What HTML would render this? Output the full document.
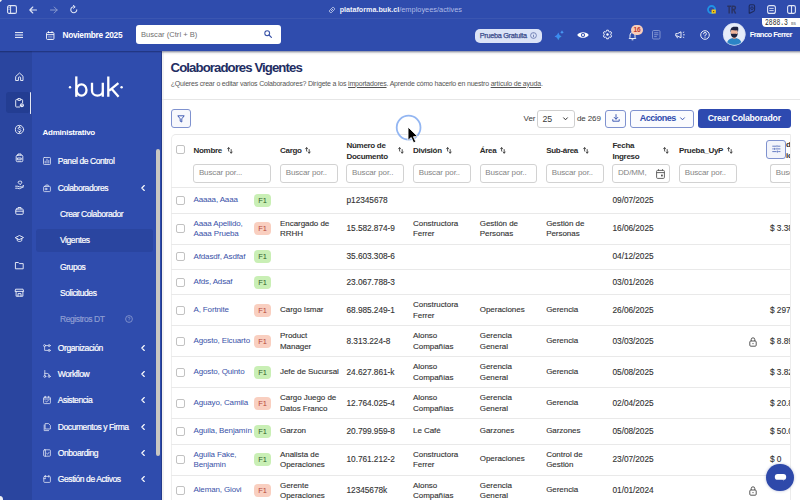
<!DOCTYPE html><html><head><meta charset='utf-8'><style>
*{box-sizing:border-box;margin:0;padding:0}
html,body{width:800px;height:500px;overflow:hidden;background:#fff;font-family:"Liberation Sans", sans-serif;}
.abs{position:absolute}
.t{position:absolute;white-space:nowrap;line-height:1}
svg{position:absolute;overflow:visible}
.hd{font-size:8px;font-weight:700;color:#2b2b2b;letter-spacing:-0.3px}
.cell{font-size:8px;color:#333;line-height:10.2px;letter-spacing:-0.05px;-webkit-text-stroke:0.12px #333}
.nm{font-size:8px;color:#3a52a8;line-height:10.2px;letter-spacing:-0.14px}
.inp{position:absolute;height:18.5px;border:1px solid #d2d2d2;border-radius:3px;background:#fff;font-size:8px;color:#858585;padding-left:4.7px;letter-spacing:-0.12px;line-height:16.5px;white-space:nowrap;overflow:hidden}
.cb{position:absolute;width:9px;height:9px;border:1px solid #c2c2c2;border-radius:2px;background:#fff}
.bdg{position:absolute;width:17.5px;height:13px;border-radius:4px;font-size:7.5px;text-align:center;line-height:13px;font-weight:400}
.g{background:#c9efb5;color:#2f5e2a}
.r{background:#f9cfc0;color:#b5473b}
.hr{position:absolute;left:171px;width:620px;height:1px;background:#e9e9e9}
.si{position:absolute;left:57.8px;font-size:8.5px;color:#fff;letter-spacing:-0.42px;-webkit-text-stroke:0.2px #fff;line-height:1;white-space:nowrap}
.ss{position:absolute;left:60px;font-size:8.5px;color:#fff;letter-spacing:-0.42px;-webkit-text-stroke:0.2px currentColor;line-height:1;white-space:nowrap}
</style></head><body>
<div class='abs' style='left:0;top:0;width:800px;height:51px;background:#2f4cad'></div>
<div class='abs' style='left:0;top:18px;width:800px;height:1px;background:rgba(255,255,255,0.06)'></div>
<div class='abs' style='left:-4px;top:-4px;width:6px;height:6px;border-radius:50%;background:#f2f2f2'></div>
<svg style='left:7px;top:5px' width='10' height='9' viewBox='0 0 10 9'><rect x='0.6' y='0.6' width='8.8' height='7.8' rx='1.5' fill='none' stroke='#dfe5f5' stroke-width='1.1'/><line x1='3.6' y1='0.6' x2='3.6' y2='8.4' stroke='#dfe5f5' stroke-width='1'/><line x1='1.4' y1='2.6' x2='2.8' y2='2.6' stroke='#dfe5f5' stroke-width='0.7'/><line x1='1.4' y1='4.3' x2='2.8' y2='4.3' stroke='#dfe5f5' stroke-width='0.7'/></svg>
<svg style='left:29px;top:5.5px' width='8' height='8' viewBox='0 0 8 8'><path d='M7.5 4H0.8M3.8 1L0.8 4L3.8 7' fill='none' stroke='#dfe5f5' stroke-width='1.1' stroke-linecap='round' stroke-linejoin='round'/></svg>
<svg style='left:50px;top:5.5px' width='8' height='8' viewBox='0 0 8 8'><path d='M0.5 4H7.2M4.2 1L7.2 4L4.2 7' fill='none' stroke='#8a9bd0' stroke-width='1' stroke-linecap='round' stroke-linejoin='round'/></svg>
<svg style='left:70px;top:5px' width='8' height='9' viewBox='0 0 8 9'><path d='M6.8 4.8A3 3 0 1 1 4.2 1.8' fill='none' stroke='#dfe5f5' stroke-width='1.1' stroke-linecap='round'/><path d='M3.4 0.4L5.2 1.8L3.6 3.3' fill='none' stroke='#dfe5f5' stroke-width='1' stroke-linecap='round' stroke-linejoin='round'/></svg>
<svg style='left:327.5px;top:5.5px' width='8' height='8' viewBox='0 0 8 8'><path d='M3.3 4.7L4.7 3.3M2.6 3.4L1.6 4.4A1.5 1.5 0 0 0 3.6 6.4L4.6 5.4M5.4 4.6L6.4 3.6A1.5 1.5 0 0 0 4.4 1.6L3.4 2.6' fill='none' stroke='#c8d2ee' stroke-width='0.9' stroke-linecap='round'/></svg>
<div class='t' style='left:339.7px;top:5.6px;font-size:7.4px;color:#fff'><span style='font-weight:700;color:#eef1fa;font-size:7.2px'>plataforma.buk.cl</span><span style='color:#aebbe6'>/employees/actives</span></div>
<svg style='left:706.8px;top:4.8px' width='10' height='10' viewBox='0 0 10 10'><circle cx='4.6' cy='4.6' r='3.6' fill='none' stroke='#1f93e6' stroke-width='1.8'/><rect x='4.6' y='4.6' width='4.2' height='4' rx='0.6' fill='#f5c518'/><circle cx='6.7' cy='6.6' r='0.6' fill='#3a3000'/></svg>
<svg style='left:727px;top:5px' width='9' height='9' viewBox='0 0 9 9'><path d='M0.3 1.2H4M2.15 1.2V8.6M5.1 8.6V1.2H6.8A1.65 1.65 0 0 1 6.8 4.5H5.1M6.6 4.5L8.6 8.6' fill='none' stroke='#2a3262' stroke-width='1.4'/></svg>
<svg style='left:747.8px;top:4.2px' width='8' height='10' viewBox='0 0 8 10'><path d='M1.2 9.6V2Q1.2 0.7 2.5 0.7H5.2Q6.6 0.7 6.6 2.2V5.4Q6.6 7.2 4.8 7.8L1.2 9.6' fill='none' stroke='#1e2a5c' stroke-width='1.1' stroke-linejoin='round'/><circle cx='4' cy='4.2' r='1.3' fill='none' stroke='#1e2a5c' stroke-width='0.9'/></svg>
<svg style='left:767px;top:5px' width='9' height='9' viewBox='0 0 9 9'><rect x='0.6' y='0.6' width='7.8' height='7.8' rx='2' fill='none' stroke='#dfe5f5' stroke-width='1.1'/><path d='M2.3 3.4H6.7M2.3 5.6H6.7' stroke='#dfe5f5' stroke-width='0.9'/></svg>
<svg style='left:787px;top:5px' width='9' height='9' viewBox='0 0 9 9'><rect x='0.6' y='0.6' width='7.8' height='7.8' rx='1.6' fill='none' stroke='#dfe5f5' stroke-width='1.1'/><line x1='4.5' y1='0.6' x2='4.5' y2='8.4' stroke='#dfe5f5' stroke-width='1.1'/></svg>
<svg style='left:15px;top:31.5px' width='8' height='6' viewBox='0 0 8 6'><path d='M0 0.6H8M0 3H8M0 5.4H8' stroke='#fff' stroke-width='0.95'/></svg>
<svg style='left:46px;top:30.5px' width='8.5' height='9' viewBox='0 0 8.5 9'><rect x='0.55' y='1.5' width='7.4' height='7' rx='1' fill='none' stroke='#fff' stroke-width='0.9'/><path d='M0.6 3.6H7.9M2.5 0.2V2.2M6 0.2V2.2' stroke='#fff' stroke-width='0.85'/><path d='M2 5.3H6.5M2 6.9H6.5' stroke='#c9d2ef' stroke-width='0.5'/></svg>
<div class='t' style='left:62.5px;top:30.8px;font-size:8.3px;font-weight:700;color:#fff;letter-spacing:-0.28px'>Noviembre 2025</div>
<div class='abs' style='left:136px;top:25.3px;width:145px;height:18.5px;background:#fff;border-radius:3px'></div>
<div class='t' style='left:141px;top:30.5px;font-size:7.6px;color:#6f6f6f'>Buscar (Ctrl + B)</div>
<svg style='left:264px;top:30px' width='8' height='8' viewBox='0 0 8 8'><circle cx='3.2' cy='3.2' r='2.4' fill='none' stroke='#3c55a8' stroke-width='1.1'/><path d='M5 5L7.4 7.4' stroke='#3c55a8' stroke-width='1.2' stroke-linecap='round'/></svg>
<div class='abs' style='left:474.7px;top:29px;width:67.5px;height:13.5px;background:#dbe3f7;border-radius:5px'></div>
<div class='t' style='left:479.7px;top:32px;font-size:7.3px;color:#3b4c8c;letter-spacing:-0.3px;-webkit-text-stroke:0.25px #3b4c8c'>Prueba Gratuita</div>
<svg style='left:529.5px;top:31.8px' width='7' height='7' viewBox='0 0 7 7'><circle cx='3.5' cy='3.5' r='2.9' fill='none' stroke='#5f70a8' stroke-width='0.8'/><path d='M3.5 3V5.2' stroke='#5f70a8' stroke-width='0.8'/><circle cx='3.5' cy='1.9' r='0.45' fill='#5f70a8'/></svg>
<svg style='left:553.5px;top:29.5px' width='11' height='11' viewBox='0 0 11 11'><defs><linearGradient id='spg' x1='0' y1='0' x2='1' y2='1'><stop offset='0' stop-color='#3f86f5'/><stop offset='0.6' stop-color='#3a8ef0'/><stop offset='1' stop-color='#3fc0a0'/></linearGradient></defs><path d='M4.3 2.6Q5 5.6 7.6 6.5Q5 7.4 4.3 10.2Q3.6 7.4 0.6 6.5Q3.6 5.6 4.3 2.6Z' fill='url(#spg)'/><path d='M8 0.3Q8.3 1.8 9.8 2.2Q8.3 2.6 8 4.1Q7.7 2.6 6.2 2.2Q7.7 1.8 8 0.3Z' fill='#4a9af5'/></svg>
<svg style='left:575.5px;top:30px' width='14' height='10' viewBox='-0.5 -0.5 12 9'><path d='M0.3 4C2.2 0.6 8.8 0.6 10.7 4C8.8 7.4 2.2 7.4 0.3 4Z' fill='#fff'/><circle cx='5.5' cy='4' r='1.9' fill='#2f4cad'/><circle cx='5.5' cy='4' r='1' fill='#fff'/></svg>
<svg style='left:602.8px;top:30.3px' width='9' height='9' viewBox='0 0 9 9'><path d='M3.66 0.18 L5.34 0.18 L5.68 1.42 L6.58 1.94 L7.82 1.61 L8.66 3.07 L7.76 3.98 L7.76 5.02 L8.66 5.93 L7.82 7.39 L6.58 7.06 L5.68 7.58 L5.34 8.82 L3.66 8.82 L3.32 7.58 L2.42 7.06 L1.18 7.39 L0.34 5.93 L1.24 5.02 L1.24 3.98 L0.34 3.07 L1.18 1.61 L2.42 1.94 L3.32 1.42Z' fill='none' stroke='#fff' stroke-width='0.9' stroke-linejoin='round'/><circle cx='4.5' cy='4.5' r='1.2' fill='#fff'/></svg>
<svg style='left:627.5px;top:30.5px' width='9' height='10' viewBox='0 0 9 10'><path d='M1.2 7.5H7.8L7 6.3V4A2.5 2.5 0 0 0 2 4V6.3Z' fill='none' stroke='#fff' stroke-width='0.9' stroke-linejoin='round'/><path d='M3.6 8.8H5.4' stroke='#fff' stroke-width='0.9'/></svg>
<div class='abs' style='left:630.8px;top:24.8px;width:12.5px;height:10.5px;border-radius:5px;background:#f9cdb9'></div>
<div class='t' style='left:630.8px;top:26.6px;width:12.5px;text-align:center;font-size:6.6px;font-weight:700;color:#c0392b;letter-spacing:-0.2px'>16</div>
<svg style='left:651.5px;top:30px' width='8' height='10' viewBox='0 0 8 10'><rect x='0.5' y='0.5' width='7.5' height='8.5' rx='1.2' fill='none' stroke='#8a9bd4' stroke-width='0.9'/><path d='M2.2 2.8H6.3M2.2 4.7H6.3M2.2 6.6H4.8' stroke='#8a9bd4' stroke-width='0.9'/></svg>
<svg style='left:675px;top:31px' width='11' height='8' viewBox='0 0 11 8'><path d='M0.8 2.6H2.6L6 0.8V6.8L2.6 5H0.8Z' fill='none' stroke='#fff' stroke-width='0.9' stroke-linejoin='round'/><path d='M1.8 5L2.4 7.2' stroke='#fff' stroke-width='0.9'/><path d='M7.8 1.6L9.2 1M8 3.8H9.8M7.8 6L9.2 6.6' stroke='#fff' stroke-width='0.8'/></svg>
<svg style='left:700px;top:30px' width='10' height='10' viewBox='0 0 10 10'><circle cx='5' cy='5' r='4.3' fill='none' stroke='#fff' stroke-width='0.9'/><path d='M3.6 3.8A1.4 1.4 0 1 1 5.2 5.2C5 5.3 5 5.6 5 6' fill='none' stroke='#fff' stroke-width='0.9' stroke-linecap='round'/><circle cx='5' cy='7.3' r='0.5' fill='#fff'/></svg>
<svg style='left:722.8px;top:23.2px' width='22.5' height='22.5' viewBox='0 0 22 22'>
<defs><clipPath id='av'><circle cx='11' cy='11' r='10.8'/></clipPath></defs>
<circle cx='11' cy='11' r='11' fill='#e6ecf9'/>
<g clip-path='url(#av)'>
<path d='M3.5 21.5C3.8 16.8 6.5 14.6 11 14.6S18.2 16.8 18.5 21.5Z' fill='#2b84c6'/>
<rect x='9.4' y='12.2' width='3.2' height='3.2' fill='#e6a184'/>
<ellipse cx='11' cy='9.2' rx='3.3' ry='3.9' fill='#efb59a'/>
<path d='M7.6 9.4C7.6 13.2 9 14.4 11 14.4S14.4 13.2 14.4 9.4L13.7 10.8C12.8 10.5 9.2 10.5 8.3 10.8Z' fill='#1e2440'/>
<path d='M7.4 9.2C7 5.4 8.2 3.8 11.2 3.7C13 3.6 14.6 3.2 14.8 4.4C15.2 5.6 14.8 7.8 14.6 9.2L14 7.2C12.2 7.4 10 7 8.2 6.8Z' fill='#1c2242'/>
</g>
<circle cx='11' cy='11' r='10.7' fill='none' stroke='#c9d3ee' stroke-width='0.5'/>
</svg>
<div class='t' style='left:749.7px;top:31px;font-size:7.6px;font-weight:700;color:#fff;letter-spacing:-0.55px'>Franco Ferrer</div>
<div class='abs' style='left:761.8px;top:17.5px;width:40px;height:9.5px;background:#fff;border-radius:0 0 0 4px'></div>
<div class='t' style='left:765.4px;top:19.4px;font-family:"Liberation Mono",monospace;font-size:8.6px;color:#2a2a2a;transform:scaleX(0.74);transform-origin:0 0'>2888.3</div>
<div class='t' style='left:791px;top:21px;font-family:"Liberation Mono",monospace;font-size:6px;color:#555;transform:scaleX(0.7);transform-origin:0 0'>ms</div>
<div class='abs' style='left:0;top:51px;width:32px;height:449px;background:#2a459f'></div>
<div class='abs' style='left:32px;top:51px;width:130px;height:449px;background:#2f4cad'></div>
<div class='abs' style='left:0;top:51px;width:800px;height:1px;background:rgba(15,25,70,0.4)'></div>
<div class='abs' style='left:0;top:52px;width:800px;height:1px;background:rgba(15,25,70,0.12)'></div>
<div class='abs' style='left:162px;top:52px;width:638px;height:3px;background:linear-gradient(rgba(0,0,0,0.10),rgba(0,0,0,0))'></div>
<div class='abs' style='left:161px;top:52px;width:1px;height:448px;background:rgba(15,25,80,0.35)'></div>
<div class='abs' style='left:162px;top:52px;width:1.5px;height:448px;background:rgba(0,0,0,0.05)'></div>
<div class='abs' style='left:5.6px;top:91.8px;width:24px;height:21.5px;background:#233d92;border-radius:3px'></div>
<div class='abs' style='left:29.5px;top:91.5px;width:1.3px;height:22.5px;background:#e6e9f3;border-radius:1px'></div>
<svg style='left:14.5px;top:71.5px' width='9' height='9' viewBox='0 0 9 9'><path d='M1 4.2L4.5 1L8 4.2V8.5H5.6V6A1.1 1.1 0 0 0 3.4 6V8.5H1Z' fill='none' stroke='#e9edf8' stroke-width='0.95' stroke-linejoin='round' stroke-linecap='round'/></svg>
<svg style='left:14.5px;top:98.3px' width='9' height='9' viewBox='0 0 9 9'><path d='M2.8 1.6H1.4A0.7 0.7 0 0 0 0.7 2.3V8.3A0.7 0.7 0 0 0 1.4 9H4.6M5.8 1.6H6.9A0.7 0.7 0 0 1 7.6 2.3V4.6' fill='none' stroke='#e9edf8' stroke-width='0.95' stroke-linejoin='round' stroke-linecap='round'/><rect x='2.8' y='0.6' width='3' height='1.8' rx='0.4' fill='none' stroke='#e9edf8' stroke-width='0.95' stroke-linejoin='round' stroke-linecap='round'/><circle cx='6.9' cy='7.2' r='2' fill='#e9edf8'/><path d='M6.9 6.2V7.3H7.7' fill='none' stroke='#233d92' stroke-width='0.6'/></svg>
<svg style='left:14.5px;top:124.80000000000001px' width='9' height='9' viewBox='0 0 9 9'><circle cx='4.5' cy='4.5' r='4.1' fill='none' stroke='#e9edf8' stroke-width='0.95' stroke-linejoin='round' stroke-linecap='round'/><path d='M5.9 3.1C5.6 2.5 5.1 2.3 4.5 2.3C3.7 2.3 3.1 2.7 3.1 3.3C3.1 4.7 5.9 4.1 5.9 5.6C5.9 6.3 5.3 6.7 4.5 6.7C3.8 6.7 3.3 6.4 3 5.9M4.5 1.5V2.3M4.5 6.7V7.5' fill='none' stroke='#e9edf8' stroke-width='0.95' stroke-linejoin='round' stroke-linecap='round'/></svg>
<svg style='left:14.5px;top:152.7px' width='9' height='9' viewBox='0 0 9 9'><rect x='1.2' y='2.2' width='6.6' height='6.5' rx='1.2' fill='none' stroke='#e9edf8' stroke-width='0.95' stroke-linejoin='round' stroke-linecap='round'/><path d='M3 2.2V1H6V2.2M2.8 5H6.2V6.8H2.8Z' fill='none' stroke='#e9edf8' stroke-width='0.95' stroke-linejoin='round' stroke-linecap='round'/></svg>
<svg style='left:14.5px;top:179.5px' width='9' height='9' viewBox='0 0 9 9'><path d='M0.6 6.2H2.3L4.4 6.8H6.5L8.6 5.5M0.6 8.2H2.3L4.6 8.7L8.6 6.8' fill='none' stroke='#e9edf8' stroke-width='0.95' stroke-linejoin='round' stroke-linecap='round'/><path d='M5 4.5L3.4 2.9A1 1 0 0 1 5 1.5A1 1 0 0 1 6.6 2.9Z' fill='none' stroke='#e9edf8' stroke-width='0.95' stroke-linejoin='round' stroke-linecap='round'/></svg>
<svg style='left:14.5px;top:206.3px' width='9' height='9' viewBox='0 0 9 9'><rect x='0.8' y='3' width='7.4' height='5.3' rx='0.8' fill='none' stroke='#e9edf8' stroke-width='0.95' stroke-linejoin='round' stroke-linecap='round'/><path d='M3 3V1.5H6V3M0.8 5.2H8.2' fill='none' stroke='#e9edf8' stroke-width='0.95' stroke-linejoin='round' stroke-linecap='round'/></svg>
<svg style='left:14.5px;top:233.5px' width='9' height='9' viewBox='0 0 9 9'><path d='M0.5 3.5L4.5 1.5L8.5 3.5L4.5 5.5Z M2.2 4.5V6.6C3.5 7.8 5.5 7.8 6.8 6.6V4.5' fill='none' stroke='#e9edf8' stroke-width='0.95' stroke-linejoin='round' stroke-linecap='round'/></svg>
<svg style='left:14.5px;top:260.7px' width='9' height='9' viewBox='0 0 9 9'><path d='M0.8 1.5H3.4L4.4 2.6H8.2V7.8H0.8Z' fill='none' stroke='#e9edf8' stroke-width='0.95' stroke-linejoin='round' stroke-linecap='round'/></svg>
<svg style='left:14.5px;top:287.5px' width='9' height='9' viewBox='0 0 9 9'><path d='M1 1.2H8L8.6 3.4H0.4Z M1.1 3.4V8.2H7.9V3.4M3 8.2V5.6H6V8.2' fill='none' stroke='#e9edf8' stroke-width='0.95' stroke-linejoin='round' stroke-linecap='round'/></svg>
<svg style='left:64px;top:70px' width='64' height='32' viewBox='0 0 64 32'>
<g fill='none' stroke='#fff' stroke-width='2.3' stroke-linecap='butt'>
<path d='M12.3 6.4V26.8'/>
<ellipse cx='17.5' cy='20' rx='5' ry='5.7'/>
<path d='M28 12.8V20.8A5.4 4.9 0 0 0 38.8 20.8V12.8M38.8 19V26.8'/>
<path d='M44.3 6.4V26.8M54.4 13.2L45.2 20.6M47.6 18.8L54.6 26.8'/>
</g>
<circle cx='6' cy='17.2' r='1.2' fill='#fff'/><circle cx='57.6' cy='17.2' r='1.2' fill='#fff'/>
</svg>
<div class='t' style='left:42.6px;top:129px;font-size:8px;font-weight:700;color:#fff;letter-spacing:-0.26px'>Administrativo</div>
<div class='abs' style='left:156.2px;top:149.3px;width:3.6px;height:307px;background:#c9c7c2;border-radius:2px'></div>
<svg style='left:43.2px;top:157.4px' width='8' height='8' viewBox='0 0 8 8'><rect x='0.5' y='0.5' width='7' height='7' rx='0.8' fill='none' stroke='#dfe4f4' stroke-width='0.8' stroke-linejoin='round' stroke-linecap='round'/><path d='M2.2 6V4.2M4 6V2.2M5.8 6V3.5' fill='none' stroke='#dfe4f4' stroke-width='0.8' stroke-linejoin='round' stroke-linecap='round'/></svg>
<div class='si' style='top:157.4px'>Panel de Control</div>
<svg style='left:43.2px;top:183.5px' width='8' height='8' viewBox='0 0 8 8'><rect x='0.6' y='2.4' width='6.8' height='5.2' rx='0.8' fill='none' stroke='#dfe4f4' stroke-width='0.8' stroke-linejoin='round' stroke-linecap='round'/><path d='M2.8 2.4V1H5.2V2.4' fill='none' stroke='#dfe4f4' stroke-width='0.8' stroke-linejoin='round' stroke-linecap='round'/><circle cx='3' cy='5' r='0.9' fill='none' stroke='#dfe4f4' stroke-width='0.8' stroke-linejoin='round' stroke-linecap='round'/></svg>
<div class='si' style='top:183.5px'>Colaboradores</div>
<svg style='left:141px;top:184.5px' width='4' height='6' viewBox='0 0 4 6'><path d='M3.3 0.5L0.8 3L3.3 5.5' fill='none' stroke='#fff' stroke-width='1.1' stroke-linecap='round' stroke-linejoin='round'/></svg>
<div class='abs' style='left:36px;top:229px;width:117px;height:23px;background:#2a45a0;border-radius:3px'></div>
<div class='ss' style='top:210px;color:#fff'>Crear Colaborador</div>
<div class='ss' style='top:236.4px;color:#fff'>Vigentes</div>
<div class='ss' style='top:262.5px;color:#fff'>Grupos</div>
<div class='ss' style='top:289px;color:#fff'>Solicitudes</div>
<div class='ss' style='top:315px;color:#8e9dd2'>Registros DT</div>
<svg style='left:124.5px;top:315px' width='8' height='8' viewBox='0 0 8 8'><circle cx='4' cy='4' r='3.4' fill='none' stroke='#8e9dd2' stroke-width='0.8'/><path d='M3 3.2A1 1 0 1 1 4.2 4.2C4 4.3 4 4.5 4 4.8' fill='none' stroke='#8e9dd2' stroke-width='0.7'/><circle cx='4' cy='5.8' r='0.35' fill='#8e9dd2'/></svg>
<svg style='left:43px;top:343.7px' width='8' height='8' viewBox='0 0 8 8'><circle cx='1.6' cy='1.6' r='1' fill='none' stroke='#dfe4f4' stroke-width='0.8' stroke-linejoin='round' stroke-linecap='round'/><circle cx='6.2' cy='1.6' r='1' fill='none' stroke='#dfe4f4' stroke-width='0.8' stroke-linejoin='round' stroke-linecap='round'/><circle cx='6.2' cy='6.4' r='1' fill='none' stroke='#dfe4f4' stroke-width='0.8' stroke-linejoin='round' stroke-linecap='round'/><path d='M2.6 1.6H5.2M1.6 2.6V6.4H5.2' fill='none' stroke='#dfe4f4' stroke-width='0.8' stroke-linejoin='round' stroke-linecap='round'/></svg>
<div class='si' style='top:343.7px'>Organización</div>
<svg style='left:141px;top:344.7px' width='4' height='6' viewBox='0 0 4 6'><path d='M3.3 0.5L0.8 3L3.3 5.5' fill='none' stroke='#fff' stroke-width='1.1' stroke-linecap='round' stroke-linejoin='round'/></svg>
<svg style='left:43px;top:369.9px' width='8' height='8' viewBox='0 0 8 8'><circle cx='1.8' cy='6.4' r='1' fill='none' stroke='#dfe4f4' stroke-width='0.8' stroke-linejoin='round' stroke-linecap='round'/><circle cx='6.2' cy='6.4' r='1' fill='none' stroke='#dfe4f4' stroke-width='0.8' stroke-linejoin='round' stroke-linecap='round'/><path d='M1.8 0.5V5.4M1.8 3.4H4.2A2 2 0 0 1 6.2 5.4' fill='none' stroke='#dfe4f4' stroke-width='0.8' stroke-linejoin='round' stroke-linecap='round'/></svg>
<div class='si' style='top:369.9px'>Workflow</div>
<svg style='left:141px;top:370.9px' width='4' height='6' viewBox='0 0 4 6'><path d='M3.3 0.5L0.8 3L3.3 5.5' fill='none' stroke='#fff' stroke-width='1.1' stroke-linecap='round' stroke-linejoin='round'/></svg>
<svg style='left:43px;top:396.4px' width='8' height='8' viewBox='0 0 8 8'><rect x='0.6' y='1.2' width='6.8' height='6.4' rx='0.8' fill='none' stroke='#dfe4f4' stroke-width='0.8' stroke-linejoin='round' stroke-linecap='round'/><path d='M0.6 3H7.4M2.4 0.3V1.6M5.6 0.3V1.6M2.6 5.2L3.6 6L5.4 4.2' fill='none' stroke='#dfe4f4' stroke-width='0.8' stroke-linejoin='round' stroke-linecap='round'/></svg>
<div class='si' style='top:396.4px'>Asistencia</div>
<svg style='left:141px;top:397.4px' width='4' height='6' viewBox='0 0 4 6'><path d='M3.3 0.5L0.8 3L3.3 5.5' fill='none' stroke='#fff' stroke-width='1.1' stroke-linecap='round' stroke-linejoin='round'/></svg>
<svg style='left:43px;top:422.6px' width='8' height='8' viewBox='0 0 8 8'><path d='M2.5 0.6H5.6L7.4 2.4V6H2.5Z' fill='none' stroke='#dfe4f4' stroke-width='0.8' stroke-linejoin='round' stroke-linecap='round'/><path d='M1.2 2V7.6H5.6' fill='none' stroke='#dfe4f4' stroke-width='0.8' stroke-linejoin='round' stroke-linecap='round'/></svg>
<div class='si' style='top:422.6px'>Documentos y Firma</div>
<svg style='left:141px;top:423.6px' width='4' height='6' viewBox='0 0 4 6'><path d='M3.3 0.5L0.8 3L3.3 5.5' fill='none' stroke='#fff' stroke-width='1.1' stroke-linecap='round' stroke-linejoin='round'/></svg>
<svg style='left:43px;top:448.8px' width='8' height='8' viewBox='0 0 8 8'><rect x='0.6' y='0.8' width='6.8' height='6.4' rx='0.8' fill='none' stroke='#dfe4f4' stroke-width='0.8' stroke-linejoin='round' stroke-linecap='round'/><path d='M2.4 0.8V7.2M3.6 4.3L4.6 5.2L6 3.4' fill='none' stroke='#dfe4f4' stroke-width='0.8' stroke-linejoin='round' stroke-linecap='round'/></svg>
<div class='si' style='top:448.8px'>Onboarding</div>
<svg style='left:141px;top:449.8px' width='4' height='6' viewBox='0 0 4 6'><path d='M3.3 0.5L0.8 3L3.3 5.5' fill='none' stroke='#fff' stroke-width='1.1' stroke-linecap='round' stroke-linejoin='round'/></svg>
<svg style='left:43px;top:475px' width='8' height='8' viewBox='0 0 8 8'><rect x='0.8' y='1.4' width='6.6' height='6' rx='0.8' fill='none' stroke='#dfe4f4' stroke-width='0.8' stroke-linejoin='round' stroke-linecap='round'/><path d='M2.4 0.4V2.2M5.8 0.4V2.2M0.8 3.6H2.6' fill='none' stroke='#dfe4f4' stroke-width='0.8' stroke-linejoin='round' stroke-linecap='round'/></svg>
<div class='si' style='top:475px'>Gestión de Activos</div>
<svg style='left:141px;top:476px' width='4' height='6' viewBox='0 0 4 6'><path d='M3.3 0.5L0.8 3L3.3 5.5' fill='none' stroke='#fff' stroke-width='1.1' stroke-linecap='round' stroke-linejoin='round'/></svg>
<div class='t' style='left:170.6px;top:61.2px;font-size:13.2px;font-weight:700;color:#222d62;letter-spacing:-0.92px'>Colaboradores Vigentes</div>
<div class='t' style='left:170.8px;top:79.8px;font-size:7px;color:#555;letter-spacing:-0.2px'>¿Quieres crear o editar varios Colaboradores? Dirígete a los <u>importadores</u>. Aprende cómo hacerlo en nuestro <u>artículo de ayuda</u>.</div>
<div class='abs' style='left:162px;top:99px;width:638px;height:1px;background:#e6e6e6'></div>
<div class='abs' style='left:171px;top:109px;width:19.8px;height:19px;border:1px solid #7f92cf;border-radius:3px;background:#f7f8fc'></div>
<svg style='left:177px;top:114.5px' width='8' height='8' viewBox='0 0 8 8'><path d='M0.8 0.8H7.2L4.8 3.8V7L3.2 6.2V3.8Z' fill='none' stroke='#2f4cad' stroke-width='0.9' stroke-linejoin='round'/></svg>
<div class='t' style='left:523.6px;top:114.5px;font-size:8px;color:#3b3b3b;letter-spacing:-0.1px'>Ver</div>
<div class='abs' style='left:537px;top:109.6px;width:37.5px;height:18.2px;border:1px solid #cfcfcf;border-radius:3px'></div>
<div class='t' style='left:542.4px;top:114.6px;font-size:8.8px;color:#3b3b3b'>25</div>
<svg style='left:562.5px;top:116.8px' width='5' height='4' viewBox='0 0 5 4'><path d='M0.6 0.8L2.5 2.8L4.4 0.8' fill='none' stroke='#333' stroke-width='1' stroke-linecap='round'/></svg>
<div class='t' style='left:576.9px;top:114.5px;font-size:8px;color:#3b3b3b;letter-spacing:-0.1px'>de 269</div>
<div class='abs' style='left:605.4px;top:109.6px;width:20.2px;height:18.2px;border:1px solid #7f92cf;border-radius:3px;background:#fafbfe'></div>
<svg style='left:611.5px;top:114px' width='8' height='8' viewBox='0 0 8 8'><path d='M4 0.6V5M2.2 3.4L4 5.2L5.8 3.4M0.8 5.6V7.2H7.2V5.6' fill='none' stroke='#2f4cad' stroke-width='0.9' stroke-linecap='round' stroke-linejoin='round'/></svg>
<div class='abs' style='left:630.1px;top:109.5px;width:63.7px;height:18.6px;border:1px solid #7f92cf;border-radius:3px;background:#fafbfe'></div>
<div class='t' style='left:639.8px;top:114px;font-size:9px;font-weight:700;color:#2f4cad;letter-spacing:-0.5px'>Acciones</div>
<svg style='left:679.5px;top:116.8px' width='5' height='4' viewBox='0 0 5 4'><path d='M0.6 0.8L2.5 2.8L4.4 0.8' fill='none' stroke='#2f4cad' stroke-width='0.9' stroke-linecap='round'/></svg>
<div class='abs' style='left:698.4px;top:109.3px;width:92.3px;height:18.7px;border-radius:3px;background:#2e4ab0'></div>
<div class='t' style='left:707.8px;top:114.4px;font-size:8.7px;font-weight:700;color:#fff;letter-spacing:-0.22px'>Crear Colaborador</div>
<div class='abs' style='left:171px;top:133.8px;width:620px;height:380px;border:1px solid #eeeeee;border-top:1.5px solid #e8e8e8;border-radius:5px 0 0 0;background:#fff'></div>
<div class='cb' style='left:176px;top:145.2px'></div>
<div class='t hd' style='left:193.5px;top:147px'>Nombre</div>
<svg style='left:226.5px;top:147px' width='6' height='7' viewBox='0 0 6 7'><path d='M1.6 4V0.8M0.6 1.8L1.6 0.6L2.6 1.8M4.2 2.6V6M3.2 5L4.2 6.2L5.2 5' fill='none' stroke='#333' stroke-width='0.85' stroke-linecap='round' stroke-linejoin='round'/></svg>
<div class='t hd' style='left:280px;top:147px'>Cargo</div>
<svg style='left:305.4px;top:147px' width='6' height='7' viewBox='0 0 6 7'><path d='M1.6 4V0.8M0.6 1.8L1.6 0.6L2.6 1.8M4.2 2.6V6M3.2 5L4.2 6.2L5.2 5' fill='none' stroke='#333' stroke-width='0.85' stroke-linecap='round' stroke-linejoin='round'/></svg>
<div class='t hd' style='left:346.5px;top:141.5px'>Número de</div>
<div class='t hd' style='left:346.5px;top:152.7px'>Documento</div>
<svg style='left:397.5px;top:147px' width='6' height='7' viewBox='0 0 6 7'><path d='M1.6 4V0.8M0.6 1.8L1.6 0.6L2.6 1.8M4.2 2.6V6M3.2 5L4.2 6.2L5.2 5' fill='none' stroke='#333' stroke-width='0.85' stroke-linecap='round' stroke-linejoin='round'/></svg>
<div class='t hd' style='left:413px;top:147px'>División</div>
<svg style='left:446.4px;top:147px' width='6' height='7' viewBox='0 0 6 7'><path d='M1.6 4V0.8M0.6 1.8L1.6 0.6L2.6 1.8M4.2 2.6V6M3.2 5L4.2 6.2L5.2 5' fill='none' stroke='#333' stroke-width='0.85' stroke-linecap='round' stroke-linejoin='round'/></svg>
<div class='t hd' style='left:479.8px;top:147px'>Área</div>
<svg style='left:500px;top:147px' width='6' height='7' viewBox='0 0 6 7'><path d='M1.6 4V0.8M0.6 1.8L1.6 0.6L2.6 1.8M4.2 2.6V6M3.2 5L4.2 6.2L5.2 5' fill='none' stroke='#333' stroke-width='0.85' stroke-linecap='round' stroke-linejoin='round'/></svg>
<div class='t hd' style='left:546.2px;top:147px'>Sub-área</div>
<svg style='left:582.5px;top:147px' width='6' height='7' viewBox='0 0 6 7'><path d='M1.6 4V0.8M0.6 1.8L1.6 0.6L2.6 1.8M4.2 2.6V6M3.2 5L4.2 6.2L5.2 5' fill='none' stroke='#333' stroke-width='0.85' stroke-linecap='round' stroke-linejoin='round'/></svg>
<div class='t hd' style='left:612.5px;top:141.5px'>Fecha</div>
<div class='t hd' style='left:612.5px;top:152.7px'>Ingreso</div>
<svg style='left:663px;top:147px' width='6' height='7' viewBox='0 0 6 7'><path d='M1.6 4V0.8M0.6 1.8L1.6 0.6L2.6 1.8M4.2 2.6V6M3.2 5L4.2 6.2L5.2 5' fill='none' stroke='#333' stroke-width='0.85' stroke-linecap='round' stroke-linejoin='round'/></svg>
<div class='t hd' style='left:679px;top:147px'>Prueba_UyP</div>
<svg style='left:726.8px;top:147px' width='6' height='7' viewBox='0 0 6 7'><path d='M1.6 4V0.8M0.6 1.8L1.6 0.6L2.6 1.8M4.2 2.6V6M3.2 5L4.2 6.2L5.2 5' fill='none' stroke='#333' stroke-width='0.85' stroke-linecap='round' stroke-linejoin='round'/></svg>
<div class='t hd' style='left:786px;top:141px'>d</div>
<div class='t hd' style='left:786px;top:152.2px'>ic</div>
<div class='abs' style='left:766.3px;top:139.5px;width:19.5px;height:19px;border:1px solid #7f92cf;border-radius:3px;background:#f2f4fb'></div>
<svg style='left:771.8px;top:145.2px' width='9' height='8' viewBox='0 0 9 8'><path d='M0.3 1.2H4.2M5.8 1.2H8.4M0.3 3.9H1.8M3.4 3.9H8.4M0.3 6.6H4.6M6.2 6.6H8.4' stroke='#3a55b0' stroke-width='0.75'/><path d='M5 0.2V2.2M2.6 2.9V4.9M5.4 5.6V7.6' stroke='#3a55b0' stroke-width='0.75'/></svg>
<div class='inp' style='left:193.2px;top:164.1px;width:78px'>Buscar por...</div>
<div class='inp' style='left:280px;top:164.1px;width:58px'>Buscar por..</div>
<div class='inp' style='left:346.3px;top:164.1px;width:57.5px'>Buscar por..</div>
<div class='inp' style='left:413px;top:164.1px;width:58px'>Buscar por..</div>
<div class='inp' style='left:479.6px;top:164.1px;width:57.5px'>Buscar por..</div>
<div class='inp' style='left:546px;top:164.1px;width:58px'>Buscar por..</div>
<div class='inp' style='left:612.2px;top:164.1px;width:58px'>DD/MM,</div>
<div class='inp' style='left:679px;top:164.1px;width:58px'>Buscar por..</div>
<div class='inp' style='left:770px;top:164.1px;width:21px;border-right:none;border-radius:3px 0 0 3px'>Busc</div>
<svg style='left:655.5px;top:168.5px' width='9' height='10' viewBox='0 0 9 10'><rect x='0.6' y='1.4' width='7.8' height='8' rx='1' fill='none' stroke='#555' stroke-width='0.9'/><path d='M0.6 3.6H8.4M2.5 0.2V1.8M6.5 0.2V1.8' stroke='#555' stroke-width='0.9'/><rect x='5' y='5.6' width='1.8' height='1.8' fill='#555'/></svg>
<div class='hr' style='top:187px'></div>
<div class='cb' style='left:176px;top:196.2px'></div>
<div class='bdg g' style='left:253.8px;top:194.2px'>F1</div>
<div class='abs nm' style='left:193.5px;top:196.28px;line-height:1;white-space:nowrap;font-size:8px;'>Aaaaa, Aaaa</div>
<div class='abs cell' style='left:346.5px;top:196.02px;line-height:1;white-space:nowrap;font-size:8.3px;'>p12345678</div>
<div class='abs cell' style='left:612.5px;top:196.02px;line-height:1;white-space:nowrap;font-size:8.3px;'>09/07/2025</div>
<div class='hr' style='top:212.8px'></div>
<div class='cb' style='left:176px;top:224.3px'></div>
<div class='bdg r' style='left:253.8px;top:222.3px'>F1</div>
<div class='abs nm' style='left:193.5px;top:219.83px;line-height:1;white-space:nowrap;font-size:8px;'>Aaaa Apellido,</div>
<div class='abs nm' style='left:193.5px;top:230.03px;line-height:1;white-space:nowrap;font-size:8px;'>Aaaa Prueba</div>
<div class='abs cell' style='left:280px;top:219.83px;line-height:1;white-space:nowrap;font-size:8px;'>Encargado de</div>
<div class='abs cell' style='left:280px;top:230.03px;line-height:1;white-space:nowrap;font-size:8px;'>RRHH</div>
<div class='abs cell' style='left:346.5px;top:224.17px;line-height:1;white-space:nowrap;font-size:8.3px;'>15.582.874-9</div>
<div class='abs cell' style='left:413px;top:219.83px;line-height:1;white-space:nowrap;font-size:8px;'>Constructora</div>
<div class='abs cell' style='left:413px;top:230.03px;line-height:1;white-space:nowrap;font-size:8px;'>Ferrer</div>
<div class='abs cell' style='left:479.8px;top:219.83px;line-height:1;white-space:nowrap;font-size:8px;'>Gestión de</div>
<div class='abs cell' style='left:479.8px;top:230.03px;line-height:1;white-space:nowrap;font-size:8px;'>Personas</div>
<div class='abs cell' style='left:546.2px;top:219.83px;line-height:1;white-space:nowrap;font-size:8px;'>Gestión de</div>
<div class='abs cell' style='left:546.2px;top:230.03px;line-height:1;white-space:nowrap;font-size:8px;'>Personas</div>
<div class='abs cell' style='left:612.5px;top:224.17px;line-height:1;white-space:nowrap;font-size:8.3px;'>16/06/2025</div>
<div class='abs cell' style='left:770px;top:224.17px;line-height:1;white-space:nowrap;font-size:8.3px;'>$ 3.38</div>
<div class='hr' style='top:243.8px'></div>
<div class='cb' style='left:176px;top:252.4px'></div>
<div class='bdg g' style='left:253.8px;top:250.4px'>F1</div>
<div class='abs nm' style='left:193.5px;top:252.58px;line-height:1;white-space:nowrap;font-size:8px;'>Afdasdf, Asdfaf</div>
<div class='abs cell' style='left:346.5px;top:252.32px;line-height:1;white-space:nowrap;font-size:8.3px;'>35.603.308-6</div>
<div class='abs cell' style='left:612.5px;top:252.32px;line-height:1;white-space:nowrap;font-size:8.3px;'>04/12/2025</div>
<div class='hr' style='top:269.1px'></div>
<div class='cb' style='left:176px;top:277.8px'></div>
<div class='bdg g' style='left:253.8px;top:275.8px'>F1</div>
<div class='abs nm' style='left:193.5px;top:277.88px;line-height:1;white-space:nowrap;font-size:8px;'>Afds, Adsaf</div>
<div class='abs cell' style='left:346.5px;top:277.62px;line-height:1;white-space:nowrap;font-size:8.3px;'>23.067.788-3</div>
<div class='abs cell' style='left:612.5px;top:277.62px;line-height:1;white-space:nowrap;font-size:8.3px;'>03/01/2026</div>
<div class='hr' style='top:294.4px'></div>
<div class='cb' style='left:176px;top:305.9px'></div>
<div class='bdg r' style='left:253.8px;top:303.9px'>F1</div>
<div class='abs nm' style='left:193.5px;top:306.03px;line-height:1;white-space:nowrap;font-size:8px;'>A, Fortnite</div>
<div class='abs cell' style='left:280px;top:306.03px;line-height:1;white-space:nowrap;font-size:8px;'>Cargo Ismar</div>
<div class='abs cell' style='left:346.5px;top:305.77px;line-height:1;white-space:nowrap;font-size:8.3px;'>68.985.249-1</div>
<div class='abs cell' style='left:413px;top:301.43px;line-height:1;white-space:nowrap;font-size:8px;'>Constructora</div>
<div class='abs cell' style='left:413px;top:311.63px;line-height:1;white-space:nowrap;font-size:8px;'>Ferrer</div>
<div class='abs cell' style='left:479.8px;top:306.03px;line-height:1;white-space:nowrap;font-size:8px;'>Operaciones</div>
<div class='abs cell' style='left:546.2px;top:306.03px;line-height:1;white-space:nowrap;font-size:8px;'>Gerencia</div>
<div class='abs cell' style='left:612.5px;top:305.77px;line-height:1;white-space:nowrap;font-size:8.3px;'>26/06/2025</div>
<div class='abs cell' style='left:770px;top:305.77px;line-height:1;white-space:nowrap;font-size:8.3px;'>$ 297</div>
<div class='hr' style='top:325.4px'></div>
<div class='cb' style='left:176px;top:336.9px'></div>
<div class='bdg r' style='left:253.8px;top:334.9px'>F1</div>
<div class='abs nm' style='left:193.5px;top:337.03px;line-height:1;white-space:nowrap;font-size:8px;'>Agosto, Elcuarto</div>
<div class='abs cell' style='left:280px;top:332.43px;line-height:1;white-space:nowrap;font-size:8px;'>Product</div>
<div class='abs cell' style='left:280px;top:342.63px;line-height:1;white-space:nowrap;font-size:8px;'>Manager</div>
<div class='abs cell' style='left:346.5px;top:336.77px;line-height:1;white-space:nowrap;font-size:8.3px;'>8.313.224-8</div>
<div class='abs cell' style='left:413px;top:332.43px;line-height:1;white-space:nowrap;font-size:8px;'>Alonso</div>
<div class='abs cell' style='left:413px;top:342.63px;line-height:1;white-space:nowrap;font-size:8px;'>Compañías</div>
<div class='abs cell' style='left:479.8px;top:332.43px;line-height:1;white-space:nowrap;font-size:8px;'>Gerencia</div>
<div class='abs cell' style='left:479.8px;top:342.63px;line-height:1;white-space:nowrap;font-size:8px;'>General</div>
<div class='abs cell' style='left:546.2px;top:337.03px;line-height:1;white-space:nowrap;font-size:8px;'>Gerencia</div>
<div class='abs cell' style='left:612.5px;top:336.77px;line-height:1;white-space:nowrap;font-size:8.3px;'>03/03/2025</div>
<div class='abs cell' style='left:770px;top:336.77px;line-height:1;white-space:nowrap;font-size:8.3px;'>$ 8.89</div>
<svg style='left:749px;top:336.6px' width='8' height='10' viewBox='0 0 8 10'><rect x='0.8' y='4' width='6.4' height='5.2' rx='1' fill='none' stroke='#444' stroke-width='0.9'/><path d='M2.2 4V2.6A1.8 1.8 0 0 1 5.8 2.6V4' fill='none' stroke='#444' stroke-width='0.9'/><circle cx='4' cy='6.6' r='0.6' fill='#444'/></svg>
<div class='hr' style='top:356.4px'></div>
<div class='cb' style='left:176px;top:367.9px'></div>
<div class='bdg g' style='left:253.8px;top:365.9px'>F1</div>
<div class='abs nm' style='left:193.5px;top:368.03px;line-height:1;white-space:nowrap;font-size:8px;'>Agosto, Quinto</div>
<div class='abs cell' style='left:280px;top:368.03px;line-height:1;white-space:nowrap;font-size:8px;'>Jefe de Sucursal</div>
<div class='abs cell' style='left:346.5px;top:367.77px;line-height:1;white-space:nowrap;font-size:8.3px;'>24.627.861-k</div>
<div class='abs cell' style='left:413px;top:363.43px;line-height:1;white-space:nowrap;font-size:8px;'>Alonso</div>
<div class='abs cell' style='left:413px;top:373.63px;line-height:1;white-space:nowrap;font-size:8px;'>Compañías</div>
<div class='abs cell' style='left:479.8px;top:363.43px;line-height:1;white-space:nowrap;font-size:8px;'>Gerencia</div>
<div class='abs cell' style='left:479.8px;top:373.63px;line-height:1;white-space:nowrap;font-size:8px;'>General</div>
<div class='abs cell' style='left:546.2px;top:368.03px;line-height:1;white-space:nowrap;font-size:8px;'>Gerencia</div>
<div class='abs cell' style='left:612.5px;top:367.77px;line-height:1;white-space:nowrap;font-size:8.3px;'>05/08/2025</div>
<div class='abs cell' style='left:770px;top:367.77px;line-height:1;white-space:nowrap;font-size:8.3px;'>$ 3.82</div>
<div class='hr' style='top:387.4px'></div>
<div class='cb' style='left:176px;top:398.9px'></div>
<div class='bdg r' style='left:253.8px;top:396.9px'>F1</div>
<div class='abs nm' style='left:193.5px;top:399.03px;line-height:1;white-space:nowrap;font-size:8px;'>Aguayo, Camila</div>
<div class='abs cell' style='left:280px;top:394.43px;line-height:1;white-space:nowrap;font-size:8px;'>Cargo Juego de</div>
<div class='abs cell' style='left:280px;top:404.63px;line-height:1;white-space:nowrap;font-size:8px;'>Datos Franco</div>
<div class='abs cell' style='left:346.5px;top:398.77px;line-height:1;white-space:nowrap;font-size:8.3px;'>12.764.025-4</div>
<div class='abs cell' style='left:413px;top:394.43px;line-height:1;white-space:nowrap;font-size:8px;'>Alonso</div>
<div class='abs cell' style='left:413px;top:404.63px;line-height:1;white-space:nowrap;font-size:8px;'>Compañías</div>
<div class='abs cell' style='left:479.8px;top:394.43px;line-height:1;white-space:nowrap;font-size:8px;'>Gerencia</div>
<div class='abs cell' style='left:479.8px;top:404.63px;line-height:1;white-space:nowrap;font-size:8px;'>General</div>
<div class='abs cell' style='left:546.2px;top:399.03px;line-height:1;white-space:nowrap;font-size:8px;'>Gerencia</div>
<div class='abs cell' style='left:612.5px;top:398.77px;line-height:1;white-space:nowrap;font-size:8.3px;'>02/04/2025</div>
<div class='abs cell' style='left:770px;top:398.77px;line-height:1;white-space:nowrap;font-size:8.3px;'>$ 20.8</div>
<div class='hr' style='top:418.4px'></div>
<div class='cb' style='left:176px;top:427.1px'></div>
<div class='bdg g' style='left:253.8px;top:425.1px'>F1</div>
<div class='abs nm' style='left:193.5px;top:427.18px;line-height:1;white-space:nowrap;font-size:8px;'>Aguila, Benjamín</div>
<div class='abs cell' style='left:280px;top:427.18px;line-height:1;white-space:nowrap;font-size:8px;'>Garzon</div>
<div class='abs cell' style='left:346.5px;top:426.92px;line-height:1;white-space:nowrap;font-size:8.3px;'>20.799.959-8</div>
<div class='abs cell' style='left:413px;top:427.18px;line-height:1;white-space:nowrap;font-size:8px;'>Le Café</div>
<div class='abs cell' style='left:479.8px;top:427.18px;line-height:1;white-space:nowrap;font-size:8px;'>Garzones</div>
<div class='abs cell' style='left:546.2px;top:427.18px;line-height:1;white-space:nowrap;font-size:8px;'>Garzones</div>
<div class='abs cell' style='left:612.5px;top:426.92px;line-height:1;white-space:nowrap;font-size:8.3px;'>05/08/2025</div>
<div class='abs cell' style='left:770px;top:426.92px;line-height:1;white-space:nowrap;font-size:8.3px;'>$ 50.0</div>
<div class='hr' style='top:443.7px'></div>
<div class='cb' style='left:176px;top:455.2px'></div>
<div class='bdg g' style='left:253.8px;top:453.2px'>F1</div>
<div class='abs nm' style='left:193.5px;top:450.73px;line-height:1;white-space:nowrap;font-size:8px;'>Aguila Fake,</div>
<div class='abs nm' style='left:193.5px;top:460.93px;line-height:1;white-space:nowrap;font-size:8px;'>Benjamin</div>
<div class='abs cell' style='left:280px;top:450.73px;line-height:1;white-space:nowrap;font-size:8px;'>Analista de</div>
<div class='abs cell' style='left:280px;top:460.93px;line-height:1;white-space:nowrap;font-size:8px;'>Operaciones</div>
<div class='abs cell' style='left:346.5px;top:455.07px;line-height:1;white-space:nowrap;font-size:8.3px;'>10.761.212-2</div>
<div class='abs cell' style='left:413px;top:450.73px;line-height:1;white-space:nowrap;font-size:8px;'>Constructora</div>
<div class='abs cell' style='left:413px;top:460.93px;line-height:1;white-space:nowrap;font-size:8px;'>Ferrer</div>
<div class='abs cell' style='left:479.8px;top:455.33px;line-height:1;white-space:nowrap;font-size:8px;'>Operaciones</div>
<div class='abs cell' style='left:546.2px;top:450.73px;line-height:1;white-space:nowrap;font-size:8px;'>Control de</div>
<div class='abs cell' style='left:546.2px;top:460.93px;line-height:1;white-space:nowrap;font-size:8px;'>Gestión</div>
<div class='abs cell' style='left:612.5px;top:455.07px;line-height:1;white-space:nowrap;font-size:8.3px;'>23/07/2025</div>
<div class='abs cell' style='left:770px;top:455.07px;line-height:1;white-space:nowrap;font-size:8.3px;'>$ 0</div>
<div class='hr' style='top:474.7px'></div>
<div class='cb' style='left:176px;top:486.2px'></div>
<div class='bdg r' style='left:253.8px;top:484.2px'>F1</div>
<div class='abs nm' style='left:193.5px;top:486.33px;line-height:1;white-space:nowrap;font-size:8px;'>Aleman, Giovi</div>
<div class='abs cell' style='left:280px;top:481.73px;line-height:1;white-space:nowrap;font-size:8px;'>Gerente</div>
<div class='abs cell' style='left:280px;top:491.93px;line-height:1;white-space:nowrap;font-size:8px;'>Operaciones</div>
<div class='abs cell' style='left:346.5px;top:486.07px;line-height:1;white-space:nowrap;font-size:8.3px;'>12345678k</div>
<div class='abs cell' style='left:413px;top:481.73px;line-height:1;white-space:nowrap;font-size:8px;'>Alonso</div>
<div class='abs cell' style='left:413px;top:491.93px;line-height:1;white-space:nowrap;font-size:8px;'>Compañías</div>
<div class='abs cell' style='left:479.8px;top:481.73px;line-height:1;white-space:nowrap;font-size:8px;'>Gerencia</div>
<div class='abs cell' style='left:479.8px;top:491.93px;line-height:1;white-space:nowrap;font-size:8px;'>General</div>
<div class='abs cell' style='left:546.2px;top:486.33px;line-height:1;white-space:nowrap;font-size:8px;'>Gerencia</div>
<div class='abs cell' style='left:612.5px;top:486.07px;line-height:1;white-space:nowrap;font-size:8.3px;'>01/01/2024</div>
<svg style='left:749px;top:485.9px' width='8' height='10' viewBox='0 0 8 10'><rect x='0.8' y='4' width='6.4' height='5.2' rx='1' fill='none' stroke='#444' stroke-width='0.9'/><path d='M2.2 4V2.6A1.8 1.8 0 0 1 5.8 2.6V4' fill='none' stroke='#444' stroke-width='0.9'/><circle cx='4' cy='6.6' r='0.6' fill='#444'/></svg>
<div class='hr' style='top:505.7px'></div>
<div class='abs' style='left:791px;top:101px;width:9px;height:399px;background:#fff'></div>
<div class='abs' style='left:790px;top:135px;width:1px;height:365px;background:#ececec'></div>
<svg style='left:395px;top:114px' width='28' height='28' viewBox='0 0 28 28'><circle cx='13.6' cy='13.6' r='11.9' fill='none' stroke='#93b6f2' stroke-width='1.8'/></svg>
<svg style='left:406.8px;top:126.2px' width='13' height='18' viewBox='0 0 13 18'><path d='M1 1V14.4L4.2 11.5L6.6 16.8L8.8 15.8L6.5 10.7H10.9Z' fill='#000' stroke='#fff' stroke-width='0.9' stroke-linejoin='round'/></svg>
<div class='abs' style='left:766.3px;top:463.9px;width:27.5px;height:27.5px;border-radius:50%;background:#2e49aa;box-shadow:0 0 3px rgba(40,60,140,0.35)'></div>
<svg style='left:773.5px;top:473px' width='13' height='9' viewBox='0 0 13 9'><rect x='0.8' y='1' width='11.4' height='5.8' rx='2.9' fill='#fff'/><path d='M8.5 6.2L9.8 8.2L9.2 6.2Z' fill='#fff'/></svg>
<div class='abs' style='left:-4px;top:496px;width:7px;height:7px;border-radius:50%;background:#eef0f5'></div>
</body></html>
